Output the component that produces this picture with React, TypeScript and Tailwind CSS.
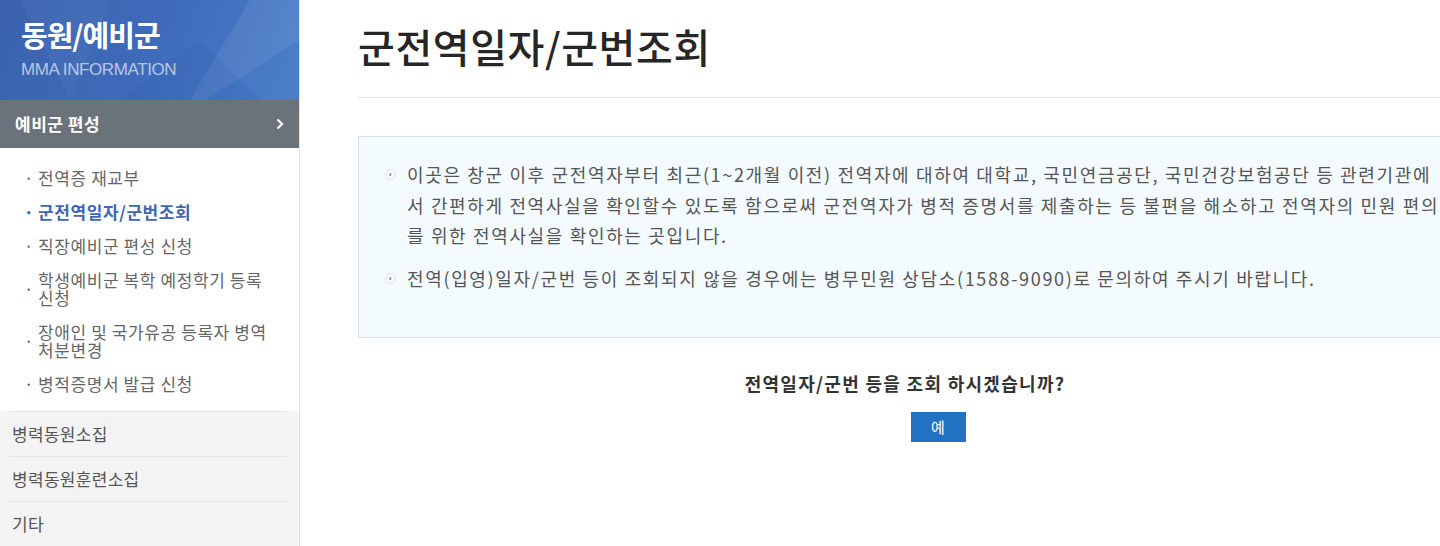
const FONT = "font-['Malgun_Gothic','Noto_Sans_CJK_KR',sans-serif]";

const subMenu = [
  { label: "전역증 재교부" },
  { label: "군전역일자/군번조회", active: true },
  { label: "직장예비군 편성 신청" },
  { label: "학생예비군 복학 예정학기 등록 신청" },
  { label: "장애인 및 국가유공 등록자 병역 처분변경" },
  { label: "병적증명서 발급 신청" },
];

const otherMenu = ["병력동원소집", "병력동원훈련소집", "기타"];

function Bullet() {
  return (
    <svg width="11" height="11" viewBox="0 0 11 11" className="mt-[10px] shrink-0">
      <circle cx="5.5" cy="5.5" r="4.8" fill="#fff" stroke="#d6d9dc" strokeWidth="1" />
      <path d="M4.6 3.6 L6.6 5.5 L4.6 7.4 Z" fill="#5b6f8f" />
    </svg>
  );
}

function Sidebar() {
  return (
    <aside className="w-[300px] shrink-0 border-r border-[#e3e3e3] min-h-[546px]">
      <div className="relative h-[100px] overflow-hidden bg-[linear-gradient(110deg,#3a62ae_0%,#3f6cbb_55%,#4b80c9_100%)] pl-[21px] pt-[14px]">
        <svg className="absolute inset-0" width="300" height="100" viewBox="0 0 300 100">
          <polygon points="20,0 110,0 70,100" fill="#ffffff" opacity="0.04" />
          <polygon points="250,0 300,0 300,40 205,100 190,100" fill="#ffffff" opacity="0.07" />
          <polygon points="120,100 200,40 260,100" fill="#1d4fa6" opacity="0.12" />
        </svg>
        <div className="relative text-[29px] font-bold leading-[40px] tracking-[-1px] text-white">
          동원/예비군
        </div>
        <div className="relative mt-[6px] font-['Liberation_Sans',sans-serif] text-[17px] leading-[20px] tracking-[-0.4px] text-[#b9c8e4]">
          MMA INFORMATION
        </div>
      </div>
      <div className="flex h-[48px] items-center justify-between bg-[#6a7379] pl-[15px] pr-[14px] text-white">
        <span className="text-[17px] font-bold tracking-[0.5px]">예비군 편성</span>
        <svg width="10" height="12" viewBox="0 0 10 12">
          <path d="M2.5 1.5 L7 6 L2.5 10.5" fill="none" stroke="#fff" strokeWidth="2.2" />
        </svg>
      </div>
      <ul className="pb-[10px] pl-[20px] pt-[13px]">
        {subMenu.map((item) => (
          <li
            key={item.label}
            className={`flex items-center py-[8px] text-[17px] leading-[18px] tracking-[0.6px] ${
              item.active ? "font-bold text-[#3f65b6]" : "text-[#666]"
            }`}
          >
            <span className="w-[18px] shrink-0 text-center">·</span>
            <span className="w-[238px]">{item.label}</span>
          </li>
        ))}
      </ul>
      <ul className="bg-[#f5f5f5] pr-[12px]">
        {otherMenu.map((label) => (
          <li key={label} className="ml-[9px] border-t border-[#e2e2e2] bg-[#f3f3f3]">
            <div className="-ml-[9px] flex h-[44px] items-center pl-[12px] text-[17px] tracking-[0.3px] text-[#555]">
              {label}
            </div>
          </li>
        ))}
      </ul>
    </aside>
  );
}

export default function App() {
  return (
    <div className={`flex w-[1440px] overflow-hidden bg-white ${FONT}`}>
      <Sidebar />
      <main className="ml-[58px] w-[1094px] shrink-0">
        <h1 className="h-[98px] border-b border-[#dde3ea] pt-[18px] text-[40px] font-medium leading-[56px] tracking-[0.6px] text-[#262626]">
          군전역일자/군번조회
        </h1>
        <div className="mt-[38px] border border-[#d4e5ee] bg-[#f4fbfe] pb-[44px] pl-[26px] pr-[6px] pt-[22px] text-[18px] leading-[30.5px] tracking-[1.65px] text-[#555]">
          <p className="flex gap-[11px]">
            <Bullet />
            <span>
              이곳은 창군 이후 군전역자부터 최근(1~2개월 이전) 전역자에 대하여 대학교, 국민연금공단, 국민건강보험공단 등 관련기관에서 간편하게 전역사실을 확인할수 있도록 함으로써 군전역자가 병적 증명서를 제출하는 등 불편을 해소하고 전역자의 민원 편의를 위한 전역사실을 확인하는 곳입니다.
            </span>
          </p>
          <p className="mt-[12px] flex gap-[11px]">
            <Bullet />
            <span>
              전역(입영)일자/군번 등이 조회되지 않을 경우에는 병무민원 상담소(1588-9090)로 문의하여 주시기 바랍니다.
            </span>
          </p>
        </div>
        <p className="mt-[33px] text-center text-[18px] font-bold leading-[24px] tracking-[1.3px] text-[#333]">
          전역일자/군번 등을 조회 하시겠습니까?
        </p>
        <div className="mt-[17px] flex justify-center pl-[66px]">
          <button className="h-[30px] w-[55px] bg-[#2272c3] text-[15px] text-white">예</button>
        </div>
      </main>
    </div>
  );
}
